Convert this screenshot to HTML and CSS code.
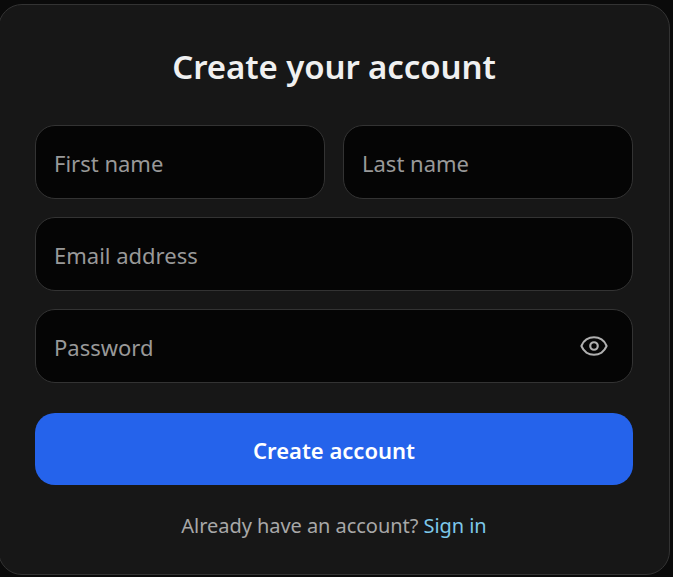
FILE: index.html
```html
<!DOCTYPE html>
<html lang="en">
<head>
  <meta charset="UTF-8">
  <title>Create your account</title>
  <link rel="stylesheet" href="styles.css">
</head>
<body>
  <div class="card">
    <h1>Create your account</h1>
    <form class="form">
      <div class="row">
        <input class="field" type="text" placeholder="First name">
        <input class="field" type="text" placeholder="Last name">
      </div>
      <input class="field" type="email" placeholder="Email address">
      <div class="password">
        <input class="field" type="password" placeholder="Password">
        <svg class="eye" viewBox="0 0 24 24" width="30" height="30" fill="none" stroke="currentColor" stroke-width="1.75" stroke-linecap="round" stroke-linejoin="round">
          <path d="M2.06 12.35a1 1 0 0 1 0-.7 10.75 10.75 0 0 1 19.88 0 1 1 0 0 1 0 .7 10.75 10.75 0 0 1-19.88 0"/>
          <circle cx="12" cy="12" r="3"/>
        </svg>
      </div>
      <button class="submit" type="button">Create account</button>
    </form>
    <p class="signin">Already have an account? <a href="#">Sign in</a></p>
  </div>
</body>
</html>
```

FILE: styles.css
```css
*, *::before, *::after {
  box-sizing: border-box;
}
html, body {
  height: 100%;
}
body {
  margin: 0;
  padding: 4px 3px 0 0;
  background: #0a0a0a;
  font-family: "Noto Sans", "Open Sans", sans-serif;
  overflow: hidden;
}
.card {
  width: 672px;
  height: 571px;
  margin-left: -2px;
  padding: 36px 36px 0;
  background: #171717;
  border: 1px solid #333;
  border-radius: 24px;
}
h1 {
  margin: 0 0 34px;
  padding-top: 1px;
  height: 50px;
  text-align: center;
  color: #f0f0f0;
  font-size: 33px;
  letter-spacing: -0.1px;
  line-height: 50px;
  font-weight: 600;
}
.form {
  display: flex;
  flex-direction: column;
  gap: 18px;
}
.row {
  display: flex;
  gap: 18px;
}
.row .field {
  flex: 1;
  min-width: 0;
}
.field {
  display: block;
  width: 100%;
  height: 74px;
  padding: 2px 18px 0;
  background: #050505;
  border: 1px solid #333;
  border-radius: 20px;
  color: #fff;
  font: inherit;
  font-size: 22px;
  outline: none;
}
.field::placeholder {
  color: #999;
  opacity: 1;
}
.password {
  position: relative;
}
.eye {
  position: absolute;
  top: 22px;
  right: 24px;
  color: #b0b0b0;
}
.submit {
  height: 72px;
  margin-top: 12px;
  padding: 2px 0 0;
  background: #2563eb;
  border: 0;
  border-radius: 20px;
  color: #fff;
  font: inherit;
  font-size: 22px;
  font-weight: 600;
}
.signin {
  margin: 26px 0 0;
  text-align: center;
  color: #a8a8a8;
  font-size: 20px;
  letter-spacing: -0.05px;
  line-height: 30px;
}
.signin a {
  color: #7dc8ea;
  text-decoration: none;
}
```
